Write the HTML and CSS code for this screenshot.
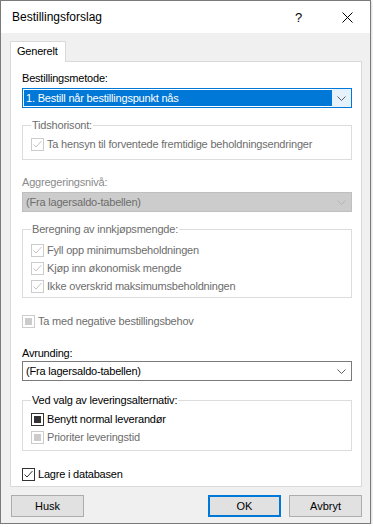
FILE: index.html
```html
<!DOCTYPE html>
<html lang="no">
<head>
  <meta charset="UTF-8" />
  <title>Bestillingsforslag</title>
  <link rel="stylesheet" href="styles.css">
</head>
<body>
  <div class="window">
    <div class="titlebar">
      <span class="title">Bestillingsforslag</span>
      <span class="help">?</span>
      <span class="close">
        <svg width="11" height="11" viewBox="0 0 11 11"><path d="M0.5 0.5 L10.5 10.5 M10.5 0.5 L0.5 10.5" stroke="#000" stroke-width="1" fill="none"/></svg>
      </span>
    </div>

    <div class="client">
      <div class="tabs">
        <div class="tab">Generelt</div>
      </div>

      <div class="panel">
        <div class="label">Bestillingsmetode:</div>
        <div class="combo focused">
          <span class="value">1. Bestill når bestillingspunkt nås</span>
          <span class="arrow"><svg width="9" height="5" viewBox="0 0 9 5"><path d="M0.5 0.5 L4.5 4.5 L8.5 0.5" stroke="#606060" fill="none"/></svg></span>
        </div>

        <fieldset class="group g-tid disabled">
          <legend>Tidshorisont:</legend>
          <div class="check disabled">
            <span class="box"><svg width="11" height="11" viewBox="0 0 11 11"><path d="M1.5 5.5 L4 8 L9.5 2" stroke="#c4c4c4" fill="none"/></svg></span>
            Ta hensyn til forventede fremtidige beholdningsendringer
          </div>
        </fieldset>

        <div class="label disabled l-aggr">Aggregeringsnivå:</div>
        <div class="combo off">
          <span class="value">(Fra lagersaldo-tabellen)</span>
          <span class="arrow"><svg width="9" height="5" viewBox="0 0 9 5"><path d="M0.5 0.5 L4.5 4.5 L8.5 0.5" stroke="#b5b5b5" fill="none"/></svg></span>
        </div>

        <fieldset class="group g-beregning disabled">
          <legend>Beregning av innkjøpsmengde:</legend>
          <div class="check disabled">
            <span class="box"><svg width="11" height="11" viewBox="0 0 11 11"><path d="M1.5 5.5 L4 8 L9.5 2" stroke="#c4c4c4" fill="none"/></svg></span>
            Fyll opp minimumsbeholdningen
          </div>
          <div class="check disabled">
            <span class="box"><svg width="11" height="11" viewBox="0 0 11 11"><path d="M1.5 5.5 L4 8 L9.5 2" stroke="#c4c4c4" fill="none"/></svg></span>
            Kjøp inn økonomisk mengde
          </div>
          <div class="check disabled">
            <span class="box"><svg width="11" height="11" viewBox="0 0 11 11"><path d="M1.5 5.5 L4 8 L9.5 2" stroke="#c4c4c4" fill="none"/></svg></span>
            Ikke overskrid maksimumsbeholdningen
          </div>
        </fieldset>

        <div class="check disabled c-negative">
          <span class="box"><span class="fill"></span></span>
          Ta med negative bestillingsbehov
        </div>

        <div class="label l-avrunding">Avrunding:</div>
        <div class="combo c-avrunding">
          <span class="value">(Fra lagersaldo-tabellen)</span>
          <span class="arrow"><svg width="9" height="5" viewBox="0 0 9 5"><path d="M0.5 0.5 L4.5 4.5 L8.5 0.5" stroke="#606060" fill="none"/></svg></span>
        </div>

        <fieldset class="group g-levering">
          <legend>Ved valg av leveringsalternativ:</legend>
          <div class="check">
            <span class="box"><span class="fill"></span></span>
            Benytt normal leverandør
          </div>
          <div class="check disabled">
            <span class="box"><span class="fill"></span></span>
            Prioriter leveringstid
          </div>
        </fieldset>

        <div class="check c-lagre">
          <span class="box"><svg width="11" height="11" viewBox="0 0 11 11"><path d="M1.5 5.5 L4 8 L9.5 2" stroke="#333" fill="none"/></svg></span>
          Lagre i databasen
        </div>
      </div>

      <div class="buttons">
        <button>Husk</button>
        <span class="spacer"></span>
        <button class="default">OK</button>
        <button>Avbryt</button>
      </div>
    </div>
  </div>
</body>
</html>
```

FILE: styles.css
```css
* {
  margin: 0;
  padding: 0;
  box-sizing: border-box;
}
body {
  font-family: 'Liberation Sans', Arial, sans-serif;
  font-size: 11px;
  letter-spacing: -0.2px;
  color: #000;
  background: #fff;
}
.window {
  width: 371px;
  height: 524px;
  border: 1px solid #7a7a7a;
  background: #f0f0f0;
  box-shadow: 1px 1px 2px rgba(0, 0, 0, 0.15);
  display: flex;
  flex-direction: column;
}
.titlebar {
  height: 32px;
  background: #fff;
  display: flex;
  align-items: center;
  padding-left: 11px;
  letter-spacing: 0;
}
.title {
  font-size: 12px;
  flex: 1;
}
.help {
  font-size: 13px;
  width: 14px;
  margin-right: 33px;
}
.close {
  display: flex;
  margin-right: 17px;
}
.client {
  flex: 1;
  padding: 8px 8px 0 9px;
  display: flex;
  flex-direction: column;
}
.tabs {
  display: flex;
  position: relative;
  z-index: 1;
}
.tab {
  width: 56px;
  height: 21px;
  margin-bottom: -1px;
  background: #fff;
  border: 1px solid #d9d9d9;
  border-bottom: none;
  padding: 3px 0 0 6px;
}
.panel {
  height: 426px;
  background: #fff;
  border: 1px solid #d9d9d9;
  padding: 9px 9px 0 11px;
}
.label {
  line-height: 14px;
}
.label.disabled {
  color: #8a8a8a;
}
.combo {
  height: 20px;
  margin-top: 3px;
  border: 1px solid #7a7a7a;
  background: #fff;
  display: flex;
  align-items: center;
}
.combo .value {
  flex: 1;
  padding-left: 3px;
  line-height: 16px;
}
.combo .arrow {
  width: 19px;
  height: 18px;
  display: flex;
  align-items: center;
  justify-content: center;
}
.combo.focused {
  border-color: #0078d7;
  padding: 1px 0 1px 1px;
}
.combo.focused .value {
  background: #0078d7;
  color: #fff;
  height: 16px;
  padding-left: 2px;
}
.combo.focused .arrow {
  background: #e5f1fb;
  height: 18px;
  margin: -1px 0;
}
.combo.off {
  background: #cccccc;
  border-color: #bfbfbf;
  color: #6d6d6d;
}
.group {
  border: 1px solid #dcdcdc;
  padding: 0 8px 6px 8px;
}
.group legend {
  padding: 0 1px;
  line-height: 13px;
}
.group.disabled legend {
  color: #6d6d6d;
}
.check {
  height: 18px;
  display: flex;
  align-items: center;
  gap: 3px;
}
.check.disabled {
  color: #6d6d6d;
}
.box {
  width: 13px;
  height: 13px;
  border: 1px solid #333;
  background: #fff;
  display: flex;
  align-items: center;
  justify-content: center;
}
.check.disabled .box {
  border-color: #cccccc;
}
.box .fill {
  width: 7px;
  height: 7px;
  background: #333;
}
.check.disabled .box .fill {
  background: #cccccc;
}
.g-tid {
  margin-top: 11px;
  padding-top: 3px;
}
.l-aggr {
  margin-top: 15px;
}
.g-beregning {
  margin-top: 11px;
  padding-top: 5px;
  padding-bottom: 2px;
}
.c-negative {
  margin-top: 14px;
}
.l-avrunding {
  margin-top: 16px;
}
.c-avrunding {
  margin-top: 1px;
}
.g-levering {
  margin-top: 13px;
  padding-top: 3px;
  padding-bottom: 4px;
}
.c-lagre {
  margin-top: 14px;
}
.buttons {
  display: flex;
  gap: 8px;
  margin-top: 8px;
  padding-left: 1px;
}
.spacer {
  flex: 1;
}
button {
  width: 73px;
  height: 22px;
  font-family: 'Liberation Sans', Arial, sans-serif;
  font-size: 11px;
  color: #000;
  background: #e1e1e1;
  border: 1px solid #adadad;
}
button.default {
  border: 2px solid #0078d7;
}
```
